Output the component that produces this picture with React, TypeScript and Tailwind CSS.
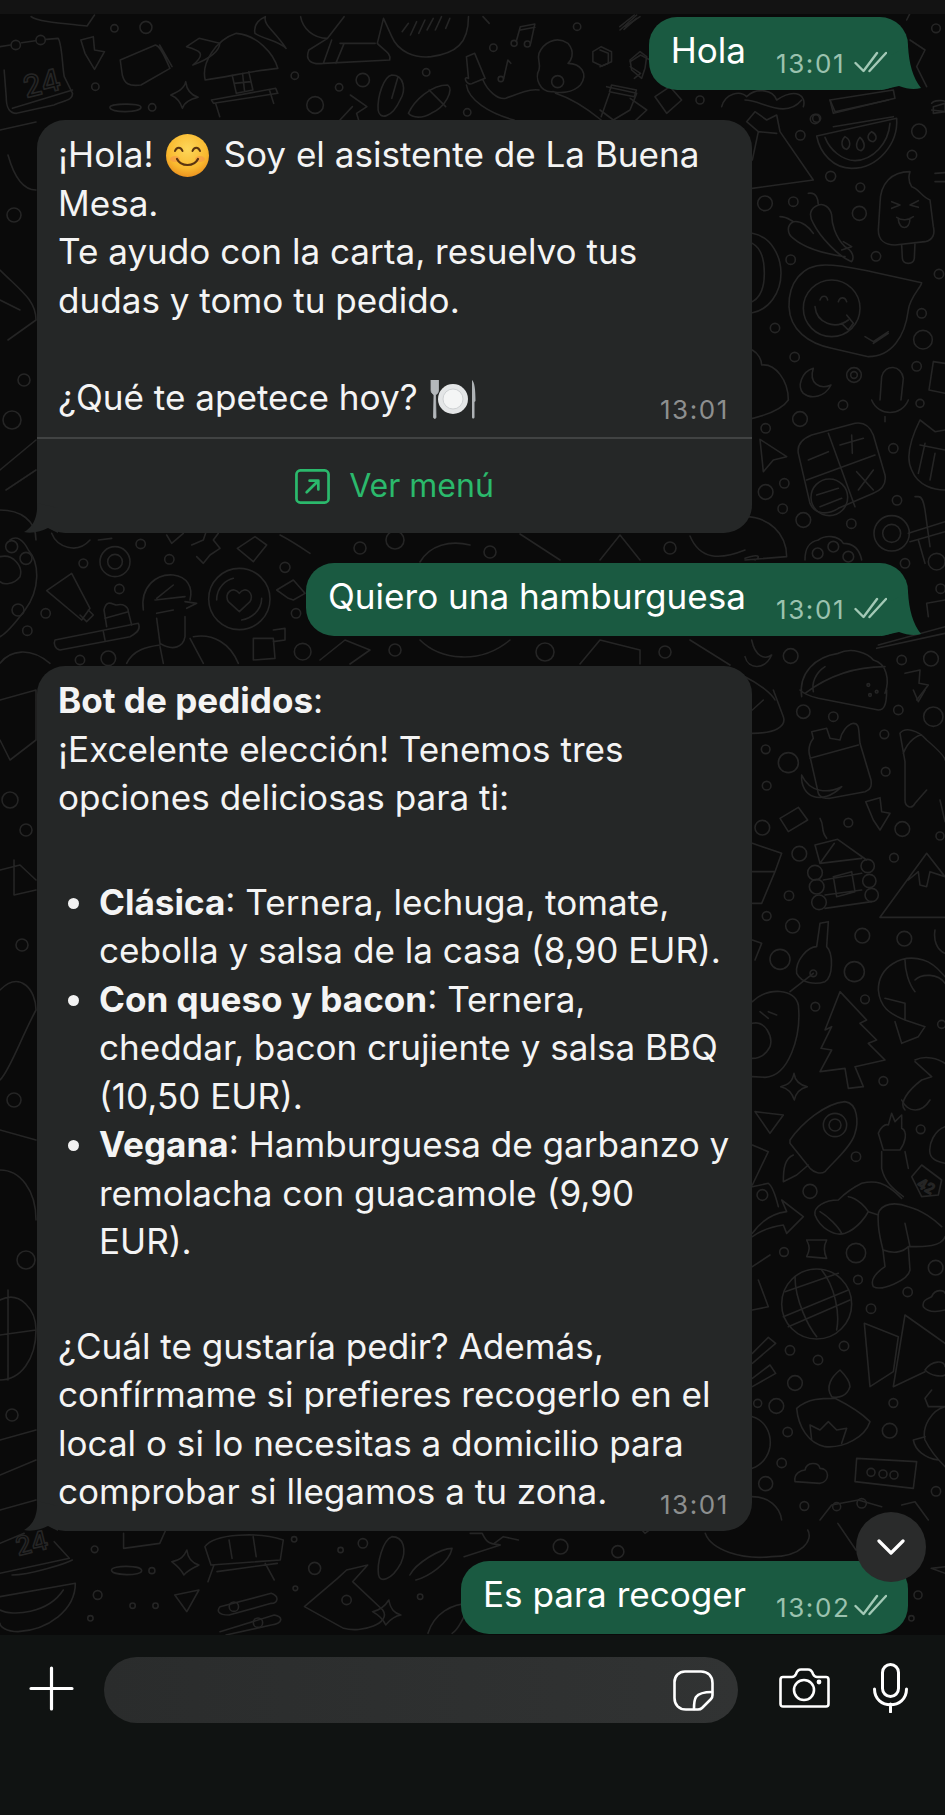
import React from 'react';

type Region = {
  x: number;
  y: number;
  sx: number;
  sy: number;
  paths: string[];
  dots: [number, number, number][];
};

// wallpaper doodles, coordinates are read from crops of the picture so each group has its own scale
const regions: Region[] = [
  {
    x: 0, y: 10, sx: 2.412, sy: 3,
    paths: [
      'M0 110 L25 105 M52 98 L85 92 M112 88 L140 85 C150 100 150 170 155 200 L175 250 C175 270 160 270 130 285 L40 310 C20 310 15 290 15 260 L10 180 M30 295 L175 240',
      'M75 20 C90 35 150 40 210 48 L228 15',
      'M195 90 L225 80 L228 120 L252 125 L228 178 L205 130Z',
      'M290 150 L375 105 C390 110 400 150 410 175 L340 225 C310 230 300 220 295 195Z M385 105 L415 170',
      'M495 210 C485 160 520 90 570 70 C620 75 660 130 670 175 C620 180 550 200 495 210Z M520 280 L530 320 M650 240 L660 280 M510 270 L665 235 L670 250 L515 280Z M560 195 L570 250 L610 240 L600 185 M565 220 L605 215 M585 190 L590 245',
      'M530 100 L480 85 L450 110 C480 120 500 130 465 165 C510 145 530 120 530 100 M615 70 C610 40 630 25 640 20 C635 45 660 60 690 115 C670 90 640 90 615 70',
      'M448 215 C450 240 460 255 478 262 C460 268 445 275 440 295 C435 275 425 262 412 255 C430 245 445 235 448 215Z',
      'M265 292 C265 280 340 278 340 292 C340 308 265 310 265 292Z',
      'M845 255 L885 290 L860 310 L865 330 M820 330 L850 290',
      'M945 195 C975 195 980 240 965 270 C945 325 915 330 912 300 C910 260 925 200 945 195Z M960 200 L945 265',
      'M985 310 C1000 270 1040 225 1080 225 C1095 240 1075 290 1040 310 C1020 325 995 325 985 310Z M1035 240 L1075 290',
      'M725 20 C730 55 755 85 790 85 L830 20 M790 85 L745 120 C735 150 750 165 780 160 L940 150 C945 130 925 120 910 100 L925 25 L945 80 C960 125 1000 145 1040 140 C1100 130 1130 100 1130 20 M780 160 L800 90 M820 100 L905 100 M810 160 L830 100',
      'M970 65 L985 40 M990 75 L1005 35 M1010 70 L1025 30 M1030 60 L1045 25 M1050 60 L1065 20 M1075 55 L1085 25',
      'M1245 95 L1255 50 L1290 42 L1280 100 M1255 60 L1290 52 M1215 205 L1225 150 L1232 160',
      'M1125 140 L1130 205 C1115 195 1125 230 1140 220 L1170 205 L1145 130 Z M1125 225 C1130 270 1180 310 1240 330 M1165 210 C1175 240 1200 270 1220 265 C1250 250 1280 235 1300 240',
      'M1300 130 C1310 100 1340 75 1370 100 C1390 130 1375 155 1370 160 C1400 160 1420 190 1400 225 C1380 250 1350 250 1335 245 C1300 250 1290 200 1300 180 C1305 160 1295 150 1300 130Z M1340 250 C1390 270 1430 310 1450 330',
      'M1450 110 L1475 125 L1475 155 L1452 168 L1430 155 L1430 125Z',
      'M1520 155 L1545 135 L1568 150 M1520 170 L1545 190 L1530 205',
      'M1475 225 L1535 240 L1530 260 L1470 245Z M1470 250 L1450 320 M1520 265 L1560 300 L1530 335',
      'M1495 50 L1530 15 M1505 58 L1535 25 M1165 20 L1180 40',
    ],
    dots: [[276, 55, 11], [352, 52, 18], [230, 230, 11], [367, 292, 11], [711, 197, 11], [875, 210, 20], [818, 232, 11], [760, 285, 25], [1028, 187, 11], [1190, 113, 11], [1127, 307, 11], [1392, 50, 11], [38, 105, 14], [98, 90, 14], [1240, 100, 9], [1272, 102, 9], [1208, 207, 8], [1345, 215, 18]],
  },
  {
    x: 600, y: 0, sx: 3, sy: 3,
    paths: [
      'M60 90 L110 45 M75 80 L120 50',
      'M0 150 L25 160 L25 190 L0 200',
      'M90 180 L120 155 L140 170 L135 205 L125 235 L95 210Z',
      'M165 290 L210 260 L245 300 L200 340Z',
      'M20 260 L110 280 L90 330 L40 360 L0 330',
      'M365 320 C375 280 420 270 440 290 C470 260 520 270 530 300 C590 260 620 290 610 320',
      'M690 300 L880 270 L885 295 L700 340 Z M700 380 L880 350',
      'M920 60 L940 20 M930 120 L975 150 L950 200 L980 260 M1000 320 L1035 310 L1035 335 L1000 340Z M1010 20 L1035 15',
    ],
    dots: [[300, 300, 12], [650, 355, 12], [1008, 85, 13]],
  },
  {
    x: 745, y: 100, sx: 3, sy: 3,
    paths: [
      'M215 108 L455 55 C460 130 400 205 320 205 C265 205 225 160 215 108Z M240 112 C255 150 290 180 330 182 C385 180 430 130 435 70',
      'M300 110 C285 125 290 145 305 148 C318 140 318 120 300 110Z M345 112 C330 130 332 150 348 152 C362 145 360 125 345 112Z M380 95 C365 105 365 122 385 125 C398 118 395 102 380 95Z',
      'M22 265 L205 240 L105 95 L95 45 L65 60 L30 35 L5 65 L40 95 L22 180 M40 95 L95 100',
      'M495 215 C440 215 405 250 405 310 L400 390 C400 420 420 435 450 435 L540 425 C565 420 570 400 565 380 L555 300 C530 290 520 265 500 260 C490 245 490 230 495 215Z M470 435 L472 475 C475 495 505 495 508 475 L510 428',
      'M440 305 L465 315 L440 325 M520 302 L495 315 L520 322 M455 352 C470 362 490 362 505 350 M460 358 C462 390 495 392 495 355',
      'M190 280 C215 275 220 300 220 315 C195 325 190 345 205 370 C225 410 280 470 320 485 C330 470 320 450 300 440 C270 410 260 370 260 345 C255 320 235 310 220 315 M295 425 L320 440 L290 450 M105 350 C125 350 135 360 145 365 C125 375 125 400 145 415 C180 445 230 460 300 470 M145 365 C170 360 195 385 205 400',
      'M240 495 C170 495 130 550 132 620 C135 690 190 730 260 745 L370 770 C440 770 480 710 490 630 C495 590 530 560 530 548 L380 515 C330 505 290 495 240 495Z',
      'M225 600 C230 585 245 585 248 600 M280 605 C285 590 300 590 305 605 M210 620 C215 670 270 690 310 660 M290 670 L310 690 L325 670 L305 645 M360 710 L385 725 L430 695 M385 730 L430 700',
      'M22 400 C80 410 108 470 108 520 C108 580 70 630 22 638 M22 430 C50 445 58 480 58 520 C58 560 50 590 22 605',
      'M205 805 C170 815 155 860 175 880 C200 900 240 890 258 855 C225 870 190 850 205 805Z',
      'M22 750 C40 760 50 780 50 795 C90 790 130 840 130 900',
      'M405 900 L410 830 C420 790 470 795 475 835 L468 900',
      'M565 785 L552 870 L600 880 M565 785 L600 790',
      'M255 0 L270 35 L430 0 M560 10 C565 0 600 0 600 5 M560 30 L600 35 M570 220 L600 218 M570 245 L600 245',
      'M0 0 C50 0 120 60 170 0',
    ],
    dots: [[210, 57, 14], [166, 106, 14], [522, 94, 22], [501, 165, 14], [257, 229, 15], [346, 262, 13], [60, 310, 22], [145, 305, 14], [343, 340, 21], [137, 479, 14], [393, 469, 14], [90, 684, 14], [149, 771, 14], [327, 825, 22], [327, 825, 10], [515, 799, 14], [530, 640, 14], [534, 719, 28], [582, 522, 14], [260, 625, 85]],
  },
  {
    x: 745, y: 400, sx: 3, sy: 3,
    paths: [
      'M45 118 L125 170 L85 180 L55 215 Z',
      'M160 160 C155 130 175 115 200 105 L330 70 C360 65 375 80 385 105 L420 225 C425 255 410 270 385 280 L280 325 C250 345 210 345 195 310 Z M250 100 L330 320 M185 240 L390 165 M285 135 L355 115 M320 105 L322 160 M190 180 L250 155 M335 215 L385 270 M385 210 L340 270 M215 285 L280 265 M225 320 L290 295',
      'M490 400 L600 365 M495 425 L600 395 M510 290 L520 290 C530 290 535 300 540 330 L555 440 M520 420 L540 490',
      'M0 350 C70 350 125 400 125 470 L0 480 M0 475 C40 460 50 470 30 480',
      'M525 60 C500 110 480 170 500 210 C520 260 570 270 600 270 M525 60 L570 95 L600 90 M525 135 L600 150 M540 130 L520 220 M570 160 L555 240',
      'M180 480 C180 440 195 425 220 420 C240 405 280 405 295 430 C330 430 345 455 350 480',
      'M170 890 C160 820 210 770 280 760 C320 740 370 760 385 780 C425 790 435 840 420 880 M180 880 C260 820 340 800 420 800 M240 800 C210 820 200 850 205 875',
      'M480 820 L525 810 L522 850 L550 855 L515 900',
      'M400 735 L600 680 M395 745 L600 700 M545 610 L600 600 M545 610 L550 650',
      'M20 720 C30 770 60 780 80 765 C60 810 10 810 0 770',
      'M0 60 C50 50 110 30 130 0 M380 0 C400 50 470 50 490 0 M420 50 L420 65',
      'M0 830 C40 850 80 880 90 900',
    ],
    dots: [[165, 57, 22], [294, 15, 14], [62, 85, 14], [445, 145, 14], [525, 10, 12], [118, 250, 14], [62, 276, 22], [113, 326, 14], [175, 360, 22], [319, 371, 14], [456, 301, 14], [470, 780, 14], [558, 776, 22], [480, 490, 14], [587, 566, 14], [137, 768, 22], [440, 400, 53], [440, 400, 27], [575, 485, 25], [253, 292, 55], [218, 460, 16], [265, 440, 16], [310, 470, 16], [370, 855, 4], [395, 875, 4], [375, 885, 4]],
  },
  {
    x: 745, y: 690, sx: 3, sy: 3,
    paths: [
      'M195 200 L220 310 C225 325 240 325 255 325 L360 305 C380 298 380 285 378 270 L345 160 C340 120 345 100 325 100 C305 105 290 125 285 150 L255 145 L245 115 L200 125 L205 145 C190 165 190 185 195 200 M195 205 L340 165',
      'M170 255 C165 320 230 350 290 290 C250 310 195 310 170 255Z',
      'M105 385 L160 352 L188 390 L130 425Z',
      'M362 335 L405 323 L410 365 L435 370 L405 420 L385 390 Z',
      'M465 130 C480 110 520 120 545 150 C580 180 600 200 600 210 M480 215 L480 330 C480 350 500 360 510 340 L545 300 M475 190 C490 150 520 135 530 135 M465 130 L480 215 M585 330 L600 395',
      'M22 460 L110 490 L90 545 L50 640 L22 640 M22 545 L90 545',
      'M210 465 L278 448 L365 510 M210 465 L225 520 L268 460 M225 520 L350 505 M235 570 L350 550 M240 615 L350 600 M240 655 L380 635 M265 560 L320 545 L330 605 L275 620Z M225 385 C240 410 225 420 245 445',
      'M405 682 L545 490 L600 560 M405 682 L600 682 M490 570 L520 545 L525 585 L545 590 L555 545 L600 560',
      'M215 770 L225 700 L250 695 L245 770 C265 790 265 860 240 875 C210 885 170 880 155 850 C150 810 190 770 215 770Z M205 850 L135 905',
      'M22 935 C70 890 150 895 160 945 C170 1040 130 1160 60 1162 L22 1160 M22 1000 C60 990 85 1040 75 1070 C60 1100 40 1105 22 1105 M45 965 L70 985 M70 965 L95 975',
      'M285 905 L365 990 L345 1000 L395 1050 L370 1060 L420 1110 L330 1130 L355 1190 L310 1195 L300 1135 L225 1145 L260 1080 L228 1075 L260 1010 L240 1020 Z',
      'M400 900 C400 830 470 790 535 810 C570 820 590 850 600 860 M400 900 C405 950 430 970 480 990 L540 1010 L520 1040 L470 1060 L450 995 M420 925 L480 940 M480 810 C480 840 490 880 510 905 M510 870 C530 850 580 850 600 880 M480 940 L480 990',
      'M147 1150 C150 1175 165 1185 187 1190 C165 1195 152 1210 148 1230 C142 1210 130 1195 107 1190 C130 1185 142 1175 147 1150Z',
      'M510 1110 C540 1095 580 1105 600 1120 M510 1115 L560 1160 L530 1170 C490 1200 460 1240 480 1260',
      'M22 130 C90 130 125 110 115 80 L85 0 M55 30 L22 60',
      'M165 0 C180 15 200 20 220 25 L400 60 C415 60 425 50 425 0 M505 0 L520 35 L540 0 M22 750 L50 760 L30 810',
      'M570 720 C565 750 575 780 600 790',
    ],
    dots: [[175, 65, 20], [265, 80, 14], [130, 218, 30], [62, 178, 13], [65, 287, 13], [418, 133, 13], [422, 245, 13], [460, 60, 14], [565, 80, 29], [310, 398, 13], [52, 413, 22], [472, 417, 22], [585, 438, 12], [447, 503, 13], [163, 491, 22], [132, 617, 14], [65, 678, 13], [143, 708, 21], [352, 737, 22], [478, 746, 22], [105, 808, 30], [328, 845, 30], [360, 928, 13], [211, 950, 13], [415, 1173, 13], [590, 1003, 12], [205, 850, 10], [210, 548, 22], [215, 590, 22], [222, 637, 22], [368, 528, 20], [373, 573, 20], [380, 615, 20]],
  },
  {
    x: 745, y: 1100, sx: 3, sy: 3,
    paths: [
      'M135 120 C170 70 240 10 300 5 C340 10 340 70 330 100 C320 140 260 190 240 215 C225 225 205 215 195 205 L135 130Z M145 165 C120 175 115 205 115 245 L155 225 L190 195',
      'M400 100 C405 85 420 70 430 75 L440 40 L450 65 L470 45 L470 85 C490 95 480 130 465 150 L415 150 Z M410 155 L410 205 C420 250 450 270 475 290 M480 155 L490 205',
      'M500 230 L530 195 L590 240 L580 285 L530 290 Z',
      'M470 295 C420 245 390 240 350 250 C310 270 290 290 280 300 C240 300 205 320 210 345 C225 385 270 410 300 400 C340 385 365 345 370 335 L400 345 M225 335 C250 350 280 380 290 400 M310 290 C340 295 365 325 370 335',
      'M400 340 C395 400 415 440 415 460 L420 500 C390 520 375 540 385 560 C410 575 490 540 495 510 L490 440 C540 440 590 440 600 410 M400 340 C410 310 450 305 490 320 C530 330 570 360 590 380 M480 370 L495 440 M415 450 C440 460 470 460 490 440',
      'M22 400 C50 360 85 340 125 335 L110 300 L175 350 L125 400 L115 375 C80 380 50 390 22 410',
      'M185 420 L245 420 C235 440 235 455 245 475 L185 470 C195 450 195 440 185 420Z',
      'M120 575 L280 520 M115 650 L310 570 M130 680 L315 600 M150 530 C150 600 190 680 215 710 M230 510 C270 560 285 640 275 690',
      'M30 35 L115 45 L75 100Z',
      'M358 670 L460 710 L445 815 L375 860Z M480 645 L600 730 M480 645 L445 860 L540 815',
      'M155 925 C190 895 230 895 270 895 C320 920 360 950 375 965 C360 1010 300 1045 240 1040 C190 1030 160 980 155 925Z M285 810 C260 830 240 860 260 890 C280 895 305 890 315 860 C315 840 295 820 285 810Z M200 1020 L195 975 L225 990 L250 965 L275 990 L305 985 L290 1030',
      'M335 1075 L515 1085 L505 1165 L330 1145 Z',
      'M150 1145 C145 1120 170 1110 180 1110 C185 1085 220 1085 225 1105 C255 1105 255 1145 225 1150 Z',
      'M535 620 C530 600 550 595 560 590 C570 565 600 570 600 580 M535 620 C550 640 580 635 600 630',
      'M22 135 L70 155 L22 255 M22 260 L70 250 C85 260 95 300 100 320 M22 500 L75 465 M22 630 L70 620 L40 540',
      'M22 760 L70 712 L92 730 L22 790 M22 835 L75 795 L92 820 L22 860',
      'M22 950 C60 960 80 1000 75 1040 C70 1070 50 1095 22 1105 M22 1190 C70 1190 105 1220 110 1260',
      'M600 80 C570 90 550 130 555 160 C560 180 580 185 600 190 M560 870 L540 895 L550 920 L600 920 M600 920 C560 930 530 980 540 1020 C560 1060 590 1090 600 1100 M505 1020 L540 1010 M505 1020 C510 1050 540 1075 580 1080',
      'M225 1260 L260 1215 L340 1200 L410 1220 M470 1215 L510 1205 L550 1260 M540 810 C560 780 600 780 600 800 M540 810 C560 830 590 830 600 825',
      'M470 0 C490 40 530 40 555 0',
    ],
    dots: [[333, 170, 14], [195, 274, 21], [117, 456, 13], [333, 459, 29], [339, 539, 13], [572, 503, 22], [488, 576, 14], [378, 626, 14], [527, 88, 13], [135, 751, 14], [297, 738, 14], [219, 780, 14], [150, 849, 22], [38, 910, 12], [94, 918, 22], [128, 996, 14], [445, 909, 13], [434, 992, 22], [110, 1089, 14], [62, 1151, 21], [178, 1218, 13], [573, 1174, 14], [270, 75, 35], [270, 75, 18], [215, 612, 105], [52, 285, 16], [378, 1117, 12], [414, 1122, 12], [447, 1125, 12], [275, 1220, 12], [350, 1210, 14]],
  },
  {
    x: 0, y: 530, sx: 3, sy: 3,
    paths: [
      'M0 80 C40 70 70 110 60 140 C40 165 10 165 0 155 M85 60 C120 100 120 180 75 240 C45 280 20 310 0 320 M30 30 C50 15 70 30 85 60',
      'M215 130 L270 235 L245 270 L140 182Z M240 255 L260 275 L280 255 L265 240',
      'M165 330 L415 280 C425 300 400 315 390 320 L180 360 C165 358 160 340 165 330Z M310 305 L315 330',
      'M320 290 L312 240 C320 205 340 225 350 225 C370 220 385 230 385 245 L395 285 M315 265 L385 245',
      'M430 240 C420 170 470 130 520 135 C560 140 580 170 570 210 M555 215 L590 220 L560 235 M465 210 L555 200 M470 250 L520 240 M480 340 C520 365 550 350 555 320 L555 260 M470 265 L480 340 M380 400 C400 360 440 350 480 345 M520 165 L470 205 M580 320 C640 310 690 340 715 400 M570 325 L610 400 M480 350 L490 400',
      'M650 210 C650 170 680 150 700 145 M785 205 C785 245 750 265 725 270 M718 190 C700 165 670 190 685 215 L718 245 L750 215 C765 190 735 165 718 190Z',
      'M830 180 L880 150 L915 190 L880 210 L865 205Z',
      'M760 325 L820 325 L825 385 L760 390Z M820 300 L855 295 L855 330 L820 335',
      'M575 45 L610 30 L620 0 M660 55 L630 75 L610 100 L590 80 M660 55 L640 30 L655 10',
      'M712 55 L765 20 L800 45 L760 95Z',
      'M155 10 C170 50 230 75 270 30 M295 30 L335 25 M0 400 C30 360 90 350 150 400',
      'M500 15 L515 40 L550 10 M840 15 C870 30 900 50 930 70',
    ],
    dots: [[35, 50, 18], [78, 85, 18], [718, 207, 92], [855, 112, 15], [345, 95, 45], [345, 95, 22], [422, 42, 14], [508, 88, 14], [250, 100, 13], [358, 177, 14], [137, 250, 14], [82, 302, 14], [240, 390, 14], [325, 385, 22], [888, 250, 14], [908, 365, 25]],
  },
  {
    x: 0, y: 1500, sx: 1.659, sy: 3,
    paths: [
      'M0 130 L40 100 M0 220 L115 175 L90 125 M20 225 C50 225 110 190 120 180',
      'M0 290 L125 250 C125 330 80 390 30 395 C10 395 0 380 0 370 M0 330 C20 350 80 340 105 270',
      'M205 100 L205 145 L265 130 L275 90',
      'M310 150 C312 180 320 190 330 195 C320 205 312 210 305 225 C300 205 292 195 285 185 C300 180 305 170 310 150Z',
      'M340 140 C355 100 430 95 470 120 L465 180 L350 195 Z M380 120 L385 175 M420 110 L425 170 M360 215 L460 190 M355 195 L345 245 M440 190 L455 240',
      'M185 210 C185 195 235 195 235 212 C235 228 185 228 185 210Z',
      'M290 285 L330 270 L310 335Z',
      'M365 320 L450 280 C465 290 460 310 450 310 L380 345 C360 345 360 330 365 320Z M365 395 L455 345 C470 350 470 370 450 375 L375 405',
      'M575 210 L610 195 L585 245 L635 330 C650 370 600 400 570 385 L505 320 L560 235Z',
      'M650 110 C670 110 675 150 665 190 C650 240 630 250 628 225 C625 190 635 120 650 110Z',
      'M680 225 C690 190 730 145 750 145 C745 190 710 230 690 240',
      'M645 300 C648 330 655 340 665 345 C650 350 645 365 640 375 C635 355 628 345 618 335 C632 330 640 315 645 300Z',
      'M710 400 C720 340 750 310 780 310 C770 350 760 390 750 400',
      'M780 100 L800 100 C810 140 820 130 830 135 L770 170 M1060 80 L1070 100 L1085 80',
      'M1170 100 C1180 150 1230 180 1280 170 C1330 170 1350 120 1340 90 M1390 70 L1420 150 L1520 120 M1568 200 L1545 205 L1568 220',
      'M820 130 L835 110 L860 120',
    ],
    dots: [[157, 148, 10], [252, 212, 9], [162, 285, 13], [220, 317, 8], [258, 317, 8], [150, 355, 8], [488, 118, 8], [565, 150, 8], [602, 130, 14], [522, 205, 18], [490, 265, 7], [697, 290, 8], [388, 320, 14], [428, 368, 14], [575, 300, 14], [930, 140, 22], [1025, 155, 18], [1523, 285, 12], [1512, 355, 8]],
  },
  {
    // left margin, and the bands between bubbles, in page pixels
    x: 0, y: 0, sx: 1, sy: 1,
    paths: [
      'M0 130 L36 122 M8 155 C15 180 25 190 36 190',
      'M0 270 C20 290 36 300 36 320 L8 340 M0 300 L20 310',
      'M0 470 L36 440 M6 490 L36 470 M0 510 C20 510 36 520 36 540',
      'M0 700 L36 690 L36 740 L10 760 L0 740',
      'M0 870 L20 865 L36 880 M14 860 L14 895 L36 890',
      'M0 990 C20 970 36 990 36 1010 C20 1040 10 1070 0 1080',
      'M0 1130 L36 1140 M0 1170 C20 1170 36 1190 36 1220',
      'M0 1300 C20 1290 36 1310 36 1330 C36 1360 20 1380 0 1380 M0 1335 L36 1330 M8 1290 L8 1380',
      'M0 1440 L36 1430 M0 1475 L36 1460 M0 1510 L36 1500',
      'M420 562 C430 545 450 540 470 545 M520 534 L560 560 M600 560 L620 535 L640 560 M690 536 C700 560 720 560 745 550',
      'M320 660 L345 640 L370 650 L350 664 M420 640 C440 660 480 665 510 640 M580 664 L600 640 L640 650 L640 664 M690 640 L730 665',
    ],
    dots: [[14, 215, 7], [24, 380, 6], [12, 420, 9], [18, 610, 6], [10, 800, 8], [26, 830, 6], [22, 945, 6], [14, 1100, 7], [26, 1260, 9], [12, 1415, 6], [360, 548, 6], [395, 540, 9], [490, 552, 6], [670, 548, 6], [395, 650, 6], [545, 652, 9], [665, 652, 6]],
  },
];

const Wallpaper = () => (
  <svg className="absolute inset-0" width="945" height="1640" viewBox="0 0 945 1640" fill="none" stroke="#252525" strokeWidth="1.6" strokeLinecap="round" strokeLinejoin="round">
    {regions.map((r, i) => (
      <g key={i} transform={`translate(${r.x} ${r.y}) scale(${1 / r.sx} ${1 / r.sy})`}>
        {r.paths.map((d, j) => (
          <path key={j} d={d} vectorEffect="non-scaling-stroke" />
        ))}
        {r.dots.map(([cx, cy, rad], j) => (
          <ellipse key={j} cx={cx} cy={cy} rx={(rad * r.sx) / r.sy} ry={rad} vectorEffect="non-scaling-stroke" />
        ))}
      </g>
    ))}
    <text x="26" y="98" fontFamily="Inter, sans-serif" fontSize="30" fontWeight="500" transform="rotate(-14 26 98)">24</text>
    <text x="18" y="1556" fontFamily="Inter, sans-serif" fontSize="26" fontWeight="500" transform="rotate(-14 18 1556)">24</text>
    <text x="916" y="1186" fontFamily="Inter, sans-serif" fontSize="14" transform="rotate(30 916 1186)">42</text>
  </svg>
);

const Checks = () => (
  <svg width="33" height="22" viewBox="0 0 33 22" fill="none" stroke="#a3c9b6" strokeWidth="2.4" strokeLinecap="round" strokeLinejoin="round">
    <path d="M1.5 12 L9.5 20 L23 2" />
    <path d="M15.5 20 L32 2" />
  </svg>
);

const Tail = ({ color, side }: { color: string; side: 'left' | 'right' }) =>
  side === 'right' ? (
    <svg className="absolute bottom-0 -right-[13px]" width="40" height="44" viewBox="0 0 40 44" fill={color}>
      <path d="M27 0 C28 18 32 32 40 42 C33 44 26 43 18 40 L0 44 L0 15Z" />
    </svg>
  ) : (
    <svg className="absolute bottom-0 -left-[13px]" width="34" height="30" viewBox="0 0 34 30" fill={color}>
      <path d="M13 0 C14 14 9 24 0 29 C8 31 18 28 24 25 L34 30 L34 5Z" />
    </svg>
  );

const Sent = ({ text, time, tail }: { text: string; time: string; tail?: boolean }) => (
  <div className="relative self-end flex items-end h-[73px] rounded-[28px] bg-[#1a5a41] pl-[22px] pr-[21px]">
    <span className="self-start mt-[9px] text-white">{text}</span>
    <span className="ml-[30px] mb-[11px] flex items-center">
      <span className="w-[71px] text-[26px] leading-[30px] tracking-[1.6px] text-[#9bc2af]">{time}</span>
      <span className="ml-[7px] -mt-[5px]"><Checks /></span>
    </span>
    {tail && <Tail color="#1a5a41" side="right" />}
  </div>
);

const Smile = () => (
  <svg className="inline-block ml-[13px] mr-[14px] align-[-10px]" width="43" height="43" viewBox="0 0 43 43">
    <defs>
      <radialGradient id="smile" cx="50%" cy="35%" r="70%">
        <stop offset="0%" stopColor="#fdd75a" />
        <stop offset="65%" stopColor="#f9b92f" />
        <stop offset="100%" stopColor="#e98a1c" />
      </radialGradient>
    </defs>
    <circle cx="21.5" cy="21.5" r="21.5" fill="url(#smile)" />
    <ellipse cx="9" cy="25" rx="5" ry="3" fill="#f58f4d" opacity=".55" />
    <ellipse cx="34" cy="25" rx="5" ry="3" fill="#f58f4d" opacity=".55" />
    <path d="M9 17 C10.5 12.5 15 12.5 16.5 17 M26.5 17 C28 12.5 32.5 12.5 34 17" fill="none" stroke="#5a3410" strokeWidth="2" strokeLinecap="round" />
    <path d="M11 25 C15 33 28 33 32 25" fill="none" stroke="#5a3410" strokeWidth="2.2" strokeLinecap="round" />
  </svg>
);

const Plate = () => (
  <svg className="inline-block ml-[12px] align-[-9px]" width="46" height="40" viewBox="0 0 46 40">
    <path d="M1 1 V11 C1 14 3 15 4 16 L3.5 38 C3.5 40 6 40 6 38 L5.5 16 C7 15 8.5 14 8.5 11 V1 M4.7 1 V10" fill="#b4b8bb" stroke="#b4b8bb" strokeWidth=".8" />
    <circle cx="23" cy="20" r="15" fill="#e4e6e7" />
    <circle cx="23" cy="20" r="10" fill="#f4f5f5" stroke="#cfd2d4" strokeWidth="1" />
    <path d="M42 38 V1 C44.5 3 45.5 10 45.5 22 L44.5 23 V38 C44.5 40 42 40 42 38Z" fill="#aeb2b5" />
  </svg>
);

const SentTime = ({ children }: { children: string }) => (
  <span className="text-[26px] leading-[22px] tracking-[1.6px] text-[#8d8f8f]">{children}</span>
);

const Item = ({ title, lines }: { title: string; lines: React.ReactNode }) => (
  <li className="flex">
    <span className="mt-[20px] ml-[10px] mr-[20px] h-[11px] w-[11px] shrink-0 rounded-full bg-[#f2f2f2]" />
    <div>
      <b className="font-bold">{title}</b>: {lines}
    </div>
  </li>
);

export default function App() {
  return (
    <div className="relative flex flex-col h-[1815px] w-[945px] overflow-hidden bg-[#0a0a0a] font-['Inter',sans-serif] text-[35.1px] leading-[48.5px] text-[#f4f4f4]">
      <Wallpaper />
      <div className="relative h-[14px] bg-[#131313]" />

      <div className="relative flex-1 flex flex-col gap-[30px] pt-[3px] px-[37px]">
        <Sent text="Hola" time="13:01" tail />

        <div className="relative w-[715px] rounded-[28px] bg-[#252727]">
          <Tail color="#252727" side="left" />
          <div className="relative pt-[10px] pl-[21px] pr-[23px] whitespace-nowrap">
            <div>¡Hola!<Smile />Soy el asistente de La Buena</div>
            <div>Mesa.</div>
            <div>Te ayudo con la carta, resuelvo tus</div>
            <div>dudas y tomo tu pedido.</div>
            <div className="h-[48.5px]" />
            <div className="flex items-end justify-between">
              <div>¿Qué te apetece hoy?<Plate /></div>
              <SentTime>13:01</SentTime>
            </div>
          </div>
          <div className="relative mt-[16px] h-[2px] bg-[#414343]" />
          <div className="relative flex h-[94px] items-center justify-center gap-[19px] text-[32px] text-[#2bb96c]">
            <svg width="35" height="35" viewBox="0 0 36 36" fill="none" stroke="#2bb96c" strokeWidth="2.8" strokeLinecap="round" strokeLinejoin="round">
              <rect x="1.5" y="1.5" width="33" height="33" rx="4" />
              <path d="M12 24 L24 12 M15 12 H24 V21" />
            </svg>
            <span>Ver menú</span>
          </div>
        </div>

        <Sent text="Quiero una hamburguesa" time="13:01" tail />

        <div className="relative w-[715px] rounded-[28px] bg-[#252727]">
          <Tail color="#252727" side="left" />
          <div className="relative pt-[10px] pb-[15px] pl-[21px] pr-[23px] whitespace-nowrap">
            <div><b className="font-bold">Bot de pedidos</b>:</div>
            <div>¡Excelente elección! Tenemos tres</div>
            <div>opciones deliciosas para ti:</div>
            <ul className="my-[56px]">
              <Item title="Clásica" lines={<>Ternera, lechuga, tomate,<br />cebolla y salsa de la casa (8,90 EUR).</>} />
              <Item title="Con queso y bacon" lines={<>Ternera,<br />cheddar, bacon crujiente y salsa BBQ<br />(10,50 EUR).</>} />
              <Item title="Vegana" lines={<>Hamburguesa de garbanzo y<br />remolacha con guacamole (9,90<br />EUR).</>} />
            </ul>
            <div>¿Cuál te gustaría pedir? Además,</div>
            <div>confírmame si prefieres recogerlo en el</div>
            <div>local o si lo necesitas a domicilio para</div>
            <div className="flex items-end justify-between">
              <div>comprobar si llegamos a tu zona.</div>
              <SentTime>13:01</SentTime>
            </div>
          </div>
        </div>

        <Sent text="Es para recoger" time="13:02" />
      </div>

      {/* scroll to bottom */}
      <div className="absolute left-[856px] top-[1512px] flex h-[70px] w-[70px] items-center justify-center rounded-full bg-[#2a2b2b]">
        <svg width="28" height="18" viewBox="0 0 28 18" fill="none" stroke="#ffffff" strokeWidth="3.2" strokeLinecap="round" strokeLinejoin="round">
          <path d="M2 3 L14 15 L26 3" />
        </svg>
      </div>

      {/* input bar */}
      <div className="relative h-[180px] bg-[#101312] pt-[22px] pl-[29px]">
        <div className="flex h-[66px] items-center">
          <svg className="-mt-[4px]" width="45" height="45" viewBox="0 0 45 45" fill="none" stroke="#ffffff" strokeWidth="3.2" strokeLinecap="round">
            <path d="M22.5 2 V43 M2 22.5 H43" />
          </svg>
          <div className="ml-[30px] flex h-[66px] w-[634px] items-center justify-end rounded-[33px] bg-gradient-to-r from-[#2a2c2c] to-[#313333] pr-[24px]">
            <svg width="41" height="41" viewBox="0 0 41 41" fill="none" stroke="#ffffff" strokeWidth="2.6" strokeLinecap="round" strokeLinejoin="round">
              <path d="M12 1.5 H28 C35 1.5 39.5 6 39.5 13 V25 C39.5 27 39 28 38 29 L29 38 C28 39 27 39.5 25 39.5 H13 C6 39.5 1.5 35 1.5 28 V12 C1.5 6 6 1.5 12 1.5 Z" />
              <path d="M21 39 C21 36 21 30 23 27 C26 23 31 22 39 22" />
            </svg>
          </div>
          <svg className="ml-[41px] -mt-[4px]" width="51" height="40" viewBox="0 0 51 40" fill="none" stroke="#ffffff" strokeWidth="2.6" strokeLinejoin="round">
            <path d="M4 9 H13 C15 9 16 8 17 6 C18 3 20 1.5 22 1.5 H29 C31 1.5 33 3 34 6 C35 8 36 9 38 9 H47 C48.5 9 49.5 10 49.5 11.5 V36 C49.5 37.5 48.5 38.5 47 38.5 H4 C2.5 38.5 1.5 37.5 1.5 36 V11.5 C1.5 10 2.5 9 4 9Z" />
            <circle cx="25" cy="22" r="10" />
            <circle cx="40" cy="14" r="2.4" fill="#ffffff" stroke="none" />
          </svg>
          <svg className="ml-[43px] -mt-[5px]" width="35" height="50" viewBox="0 0 35 50" fill="none" stroke="#ffffff" strokeWidth="3" strokeLinecap="round">
            <rect x="9.5" y="1.5" width="16" height="32" rx="8" />
            <path d="M1.5 26 C1.5 47 33.5 47 33.5 26 M17.5 41 V49" />
          </svg>
        </div>
      </div>
    </div>
  );
}
